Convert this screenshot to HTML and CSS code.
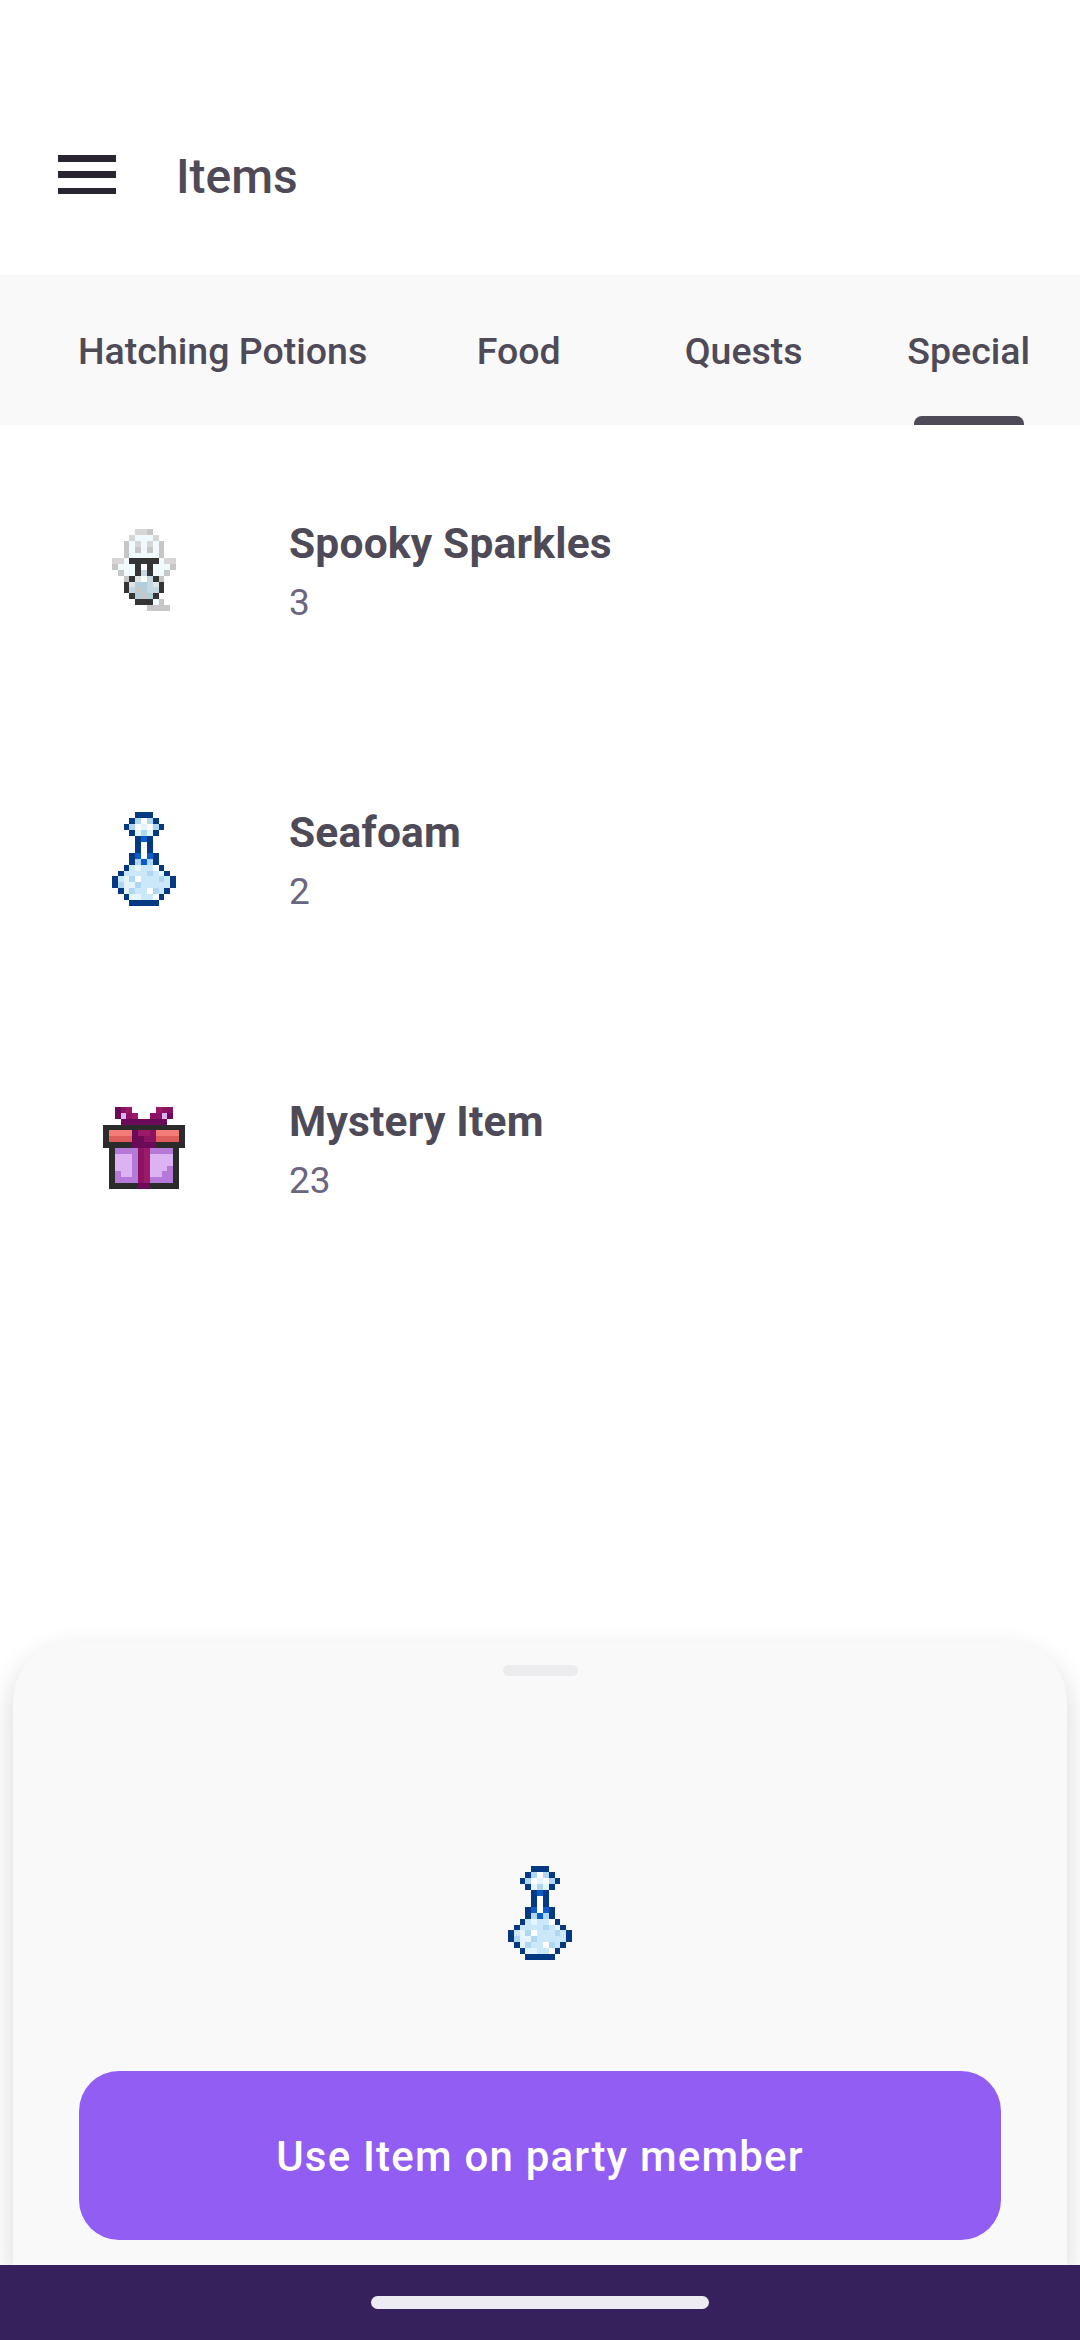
FILE: index.html
```html
<!DOCTYPE html>
<html lang="en">
<head>
<meta charset="utf-8">
<title>Items</title>
<link rel="stylesheet" href="styles.css">
</head>
<body>
<svg class="defs" width="0" height="0" aria-hidden="true">
  <symbol id="bottle" viewBox="0 0 11 16">
    <path fill="#cbe8fb" d="M3 9h5v1H3zM2 10h7v1H2zM1 11h9v2H1zM2 13h7v1H2zM3 14h5v1H3z"/>
    <path fill="#e4f5fd" d="M5 2h1v1H5zM4 3h1v1H4zM6 3h1v1H6zM4 9h1v1H4zM2 11h1v1H2zM2 12h2v1H2zM8 10h1v1H8zM2 13h1v1H2zM3 14h2v1H3z"/>
    <path fill="#afd7ef" d="M4 1h1v1H4zM6 1h1v1H6zM3 2h1v1H3zM7 2h1v1H7zM5 3h1v1H5zM4 8h1v1H4zM6 8h1v1H6zM6 10h1v1H6zM3 11h1v1H3zM8 11h1v1H8zM1 12h1v1H1zM4 12h1v1H4zM3 13h1v1H3zM7 13h1v1H7z"/>
    <path fill="#fff" d="M5 1h1v1H5zM4 2h1v1H4zM6 2h1v1H6zM5 5h1v3H5zM7 9h1v1H7zM4 11h1v1H4zM6 13h1v1H6zM7 14h1v1H7z"/>
    <path fill="#0a5cc9" d="M5 4h1v1H5zM4 7h1v1H4zM6 7h1v1H6zM5 8h1v1H5z"/>
    <path fill="#053a82" d="M4 0h3v1H4zM3 1h1v1H3zM7 1h1v1H7zM2 2h1v1H2zM8 2h1v1H8zM3 3h1v1H3zM7 3h1v1H7zM4 4h1v3H4zM6 4h1v3H6zM3 7h1v2H3zM7 7h1v2H7zM2 9h1v1H2zM8 9h1v1H8zM1 10h1v1H1zM9 10h1v1H9zM0 11h1v2H0zM10 11h1v2H10zM1 13h1v1H1zM9 13h1v1H9zM2 14h1v1H2zM8 14h1v1H8zM3 15h5v1H3z"/>
  </symbol>
</svg>

<div class="page">
  <header class="topbar">
    <div class="menu" aria-label="Menu"><span></span><span></span><span></span></div>
    <h1 class="page-title">Items</h1>
  </header>

  <nav class="tabs">
    <div class="tab">Hatching Potions</div>
    <div class="tab">Food</div>
    <div class="tab">Quests</div>
    <div class="tab tab-active">Special</div>
  </nav>

  <main class="content">
    <div class="item">
      <div class="item-icon">
        <svg class="sprite spooky" viewBox="0 0 11 14">
          <path fill="#d6d6d6" d="M4 0h2v1H4zM3 1h1v1H3zM7 1h1v1H7zM4 2h1v1H4zM6 2h1v1H6zM0 5h2v1H0zM9 5h2v1H9z"/>
          <path fill="#c6c6c6" d="M6 0h1v1H6zM2 2h1v3H2zM8 2h1v3H8zM4 3h1v1H4zM6 3h1v1H6zM0 6h1v1H0zM10 6h1v1H10zM1 7h1v1H1zM9 7h1v1H9zM2 8h1v1H2zM8 8h1v1H8zM8 12h1v1H8zM6 13h4v1H6z"/>
          <path fill="#f0fafc" d="M4 1h3v1H4zM3 2h1v1H3zM5 2h1v1H5zM7 2h1v1H7zM3 3h1v1H3zM5 3h1v1H5zM7 3h1v1H7zM3 4h5v1H3zM2 5h1v1H2zM8 5h1v1H8zM1 6h3v1H1zM7 6h3v1H7zM2 7h2v1H2zM7 7h2v1H7zM7 12h1v1H7z"/>
          <path fill="#fff" d="M5 6h1v1H5zM5 8h1v1H5z"/>
          <path fill="#dfe4e6" d="M4 8h1v1H4zM3 9h1v1H3zM7 9h1v1H7z"/>
          <path fill="#c5d8e2" d="M5 7h1v1H5zM6 8h1v1H6zM6 9h1v1H6zM3 10h1v1H3zM6 10h2v1H6z"/>
          <path fill="#b3cedb" d="M4 9h2v1H4zM5 10h1v1H5zM4 11h1v1H4zM6 11h1v1H6z"/>
          <path fill="#c8c8c8" d="M4 10h1v1H4zM5 11h1v1H5z"/>
          <path fill="#353535" d="M3 5h5v1H3zM4 6h1v2H4zM6 6h1v2H6zM3 8h1v1H3zM7 8h1v1H7zM2 9h1v2H2zM8 9h1v2H8zM3 11h1v1H3zM7 11h1v1H7zM4 12h3v1H4z"/>
        </svg>
      </div>
      <div class="item-text">
        <div class="item-name">Spooky Sparkles</div>
        <div class="item-count">3</div>
      </div>
    </div>

    <div class="item">
      <div class="item-icon">
        <svg class="sprite bottle"><use href="#bottle"/></svg>
      </div>
      <div class="item-text">
        <div class="item-name">Seafoam</div>
        <div class="item-count">2</div>
      </div>
    </div>

    <div class="item">
      <div class="item-icon">
        <svg class="sprite gift" viewBox="0 0 14 14">
          <path fill="#2b2b2b" d="M0 3h14v1H0zM0 4h1v2H0zM13 4h1v2H13zM0 6h5v1H0zM9 6h5v1H9zM1 7h1v6H1zM12 7h1v6H12zM1 13h12v1H1z"/>
          <path fill="#f47c78" d="M1 4h4v1H1zM9 4h4v1H9z"/>
          <path fill="#dd5c5c" d="M1 5h4v1H1zM9 5h4v1H9z"/>
          <path fill="#b57ad8" d="M2 7h4v1H2zM8 7h4v1H8zM5 8h1v5H5zM2 11h1v1H2zM2 12h3v1H2zM11 10h1v1H11zM10 11h2v1H10zM8 12h4v1H8z"/>
          <path fill="#dcb2f2" d="M2 8h3v3H2zM3 11h2v1H3zM8 8h4v2H8zM8 10h3v1H8zM8 11h2v1H8zM3 1h1v1H3zM10 1h1v1H10z"/>
          <path fill="#9c1a68" d="M4 0h1v1H4zM9 0h1v1H9zM5 1h1v1H5zM6 4h2v1H6zM7 7h1v6H7z"/>
          <path fill="#8c1264" d="M3 0h1v1H3zM10 0h2v1H10zM4 1h1v1H4zM8 1h2v1H8zM8 4h1v1H8zM7 5h2v1H7zM6 7h1v6H6z"/>
          <path fill="#6a0a58" d="M2 0h1v2H2zM11 1h1v1H11zM3 2h8v1H3zM5 4h1v2H5zM6 5h1v1H6zM5 6h4v1H5zM6 13h2v1H6z"/>
        </svg>
      </div>
      <div class="item-text">
        <div class="item-name">Mystery Item</div>
        <div class="item-count">23</div>
      </div>
    </div>

    <section class="sheet">
      <div class="handle"></div>
      <svg class="sprite bottle sheet-icon"><use href="#bottle"/></svg>
      <button class="use-button">Use Item on party member</button>
    </section>
  </main>

  <footer class="navbar"><div class="home-pill"></div></footer>
</div>
</body>
</html>
```

FILE: styles.css
```css
* { box-sizing: border-box; }

html, body {
  margin: 0;
  padding: 0;
  background: #fff;
}

body {
  font-family: Roboto, "Liberation Sans", sans-serif;
  color: #4e4a57;
}

.defs { position: absolute; }

.page {
  width: 1080px;
  height: 2340px;
  display: flex;
  flex-direction: column;
  overflow: hidden;
}

.topbar {
  height: 275px;
  padding: 155px 0 0 58px;
  display: flex;
  align-items: flex-start;
  background: #fff;
}

.menu {
  width: 58px;
  height: 39px;
  display: flex;
  flex-direction: column;
  justify-content: space-between;
}

.menu span {
  display: block;
  height: 6.5px;
  background: #282530;
}

.page-title {
  margin: -6px 0 0 60px;
  font-size: 48px;
  line-height: 56px;
  font-weight: 500;
}

.tabs {
  height: 150px;
  padding-left: 39px;
  display: flex;
  background: #f9f9f9;
  overflow: hidden;
}

.tab {
  position: relative;
  flex: none;
  min-width: 225px;
  padding: 51px 39px 0;
  display: flex;
  justify-content: center;
  font-size: 37.5px;
  line-height: 50px;
  font-weight: 500;
  white-space: nowrap;
}

.tab-active::after {
  content: "";
  position: absolute;
  left: 58px;
  bottom: 0;
  width: 110px;
  height: 9px;
  border-radius: 8px 8px 0 0;
  background: #4e4a57;
}

.content {
  position: relative;
  flex: 1;
}

.item {
  height: 289px;
  padding-left: 61px;
  display: flex;
  align-items: center;
}

.item-icon {
  width: 165px;
  height: 165px;
  flex: none;
  display: flex;
  align-items: center;
  justify-content: center;
}

.item-text {
  margin: 6px 0 0 63px;
}

.item-name {
  font-size: 42.5px;
  line-height: 52px;
  font-weight: 700;
  letter-spacing: 0.2px;
}

.item-count {
  margin-top: 8px;
  font-size: 37px;
  line-height: 50px;
  color: #6a6580;
}

.sprite {
  display: block;
  shape-rendering: crispEdges;
}

.spooky { width: 64px; height: 82px; }
.bottle { width: 64px; height: 94px; }
.gift { width: 82px; height: 82px; }

.sheet {
  position: absolute;
  left: 13px;
  right: 13px;
  bottom: 0;
  height: 623px;
  padding-top: 23px;
  display: flex;
  flex-direction: column;
  align-items: center;
  background: #f9f9f9;
  border-radius: 60px 60px 0 0;
  box-shadow: 0 12px 30px rgba(0, 0, 0, 0.16);
}

.handle {
  width: 75px;
  height: 11px;
  border-radius: 6px;
  background: #ececee;
}

.sheet-icon {
  margin-top: 190px;
}

.use-button {
  margin-top: 111px;
  width: 922px;
  height: 169px;
  padding-top: 2px;
  border: 0;
  border-radius: 40px;
  background: #925df2;
  color: #fff;
  font-family: inherit;
  font-size: 42px;
  font-weight: 500;
  letter-spacing: 1.2px;
}

.navbar {
  position: relative;
  height: 75px;
  padding-top: 31px;
  display: flex;
  justify-content: center;
  background: #36215c;
}

.home-pill {
  width: 338px;
  height: 13px;
  border-radius: 7px;
  background: #edecf2;
}
```
